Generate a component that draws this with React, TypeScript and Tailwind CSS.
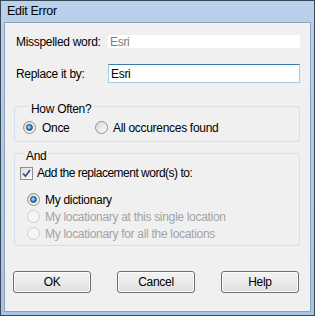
import { useState } from 'react'

const FONT = "font-['Liberation_Sans',Arial,sans-serif]"

// ─── Radio ──────────────────────────────────────────────────────

function Radio({ checked, disabled }: { checked?: boolean; disabled?: boolean }) {
  return (
    <span
      className={`
        w-[13px] h-[13px] rounded-full flex items-center justify-center flex-shrink-0 border
        ${disabled
          ? 'border-[#cfcfcf] bg-[#f4f4f4]'
          : 'border-[#8e8f8f] bg-gradient-to-br from-[#d6d6d6] to-[#ffffff]'}
      `}
    >
      {checked && (
        <span className="w-[7px] h-[7px] rounded-full border border-[#1b4a75] bg-[radial-gradient(circle_at_40%_40%,#b6e4ff_0%,#2f8ad6_55%,#124f8a_100%)]" />
      )}
    </span>
  )
}

function Checkbox({ checked }: { checked: boolean }) {
  return (
    <span className="w-[13px] h-[13px] border border-[#8e8f8f] bg-gradient-to-br from-[#dcdcdc] to-[#ffffff] flex items-center justify-center flex-shrink-0">
      {checked && (
        <svg width="9" height="9" viewBox="0 0 9 9">
          <path d="M1 4.5 L3.5 7.2 L8 1" fill="none" stroke="#3c4f8c" strokeWidth="1.8" />
        </svg>
      )}
    </span>
  )
}

function Button({ label }: { label: string }) {
  return (
    <button
      type="button"
      className="
        w-[78px] h-[22px] rounded-[3px] border border-[#707070] text-[12px] text-black
        bg-gradient-to-b from-[#f3f3f3] via-[#ebebeb] to-[#dddddd]
        shadow-[inset_0_0_0_1px_#fcfcfc]
      "
    >
      {label}
    </button>
  )
}

export default function App() {
  const [often, setOften] = useState<'once' | 'all'>('once')

  return (
    <div
      className={`${FONT} w-[315px] h-[316px] flex flex-col border border-[#3b4856] bg-gradient-to-b from-[#b9d1ea] to-[#a7c4e4] text-black text-[12px] tracking-[-0.3px]`}
    >
      {/* Title bar */}
      <div className="h-[21px] flex items-center pl-[6px] text-[12.5px] leading-none">
        Edit Error
      </div>

      {/* Client area */}
      <div className="flex-1 mx-[3px] mb-[3px] border border-[#8aa3bf] bg-[#f0f0f0] flex flex-col">
        <div className="mt-[12px] flex items-center h-[13px] pl-[11px]">
          <span className="w-[92px] leading-none">Misspelled word:</span>
          <div className="w-[192px] h-[13px] bg-white text-[#7a7a7a] pl-[2px] flex items-center leading-none">
            Esri
          </div>
        </div>

        <div className="mt-[16px] flex items-center h-[19px] pl-[11px]">
          <span className="w-[92px] leading-none">Replace it by:</span>
          <input
            defaultValue="Esri"
            className="w-[192px] h-[19px] bg-white border border-[#a4c9e3] border-t-[#3d7bad] px-[2px] text-[12px] tracking-[-0.3px] outline-none"
          />
        </div>

        {/* How Often? */}
        <fieldset className="mt-[13px] ml-[9px] w-[286px] border border-[#d5dfe5] rounded-[3px] px-[8px] pb-[7px]">
          <legend className="ml-[6px] px-[2px] pt-[6px] leading-[14px]">How Often?</legend>
          <div className="mt-[5px] flex items-center h-[13px]">
            <label className="flex items-center gap-[6px] w-[72px]" onClick={() => setOften('once')}>
              <Radio checked={often === 'once'} />
              <span className="leading-none">Once</span>
            </label>
            <label className="flex items-center gap-[5px]" onClick={() => setOften('all')}>
              <Radio checked={often === 'all'} />
              <span className="leading-none">All occurences found</span>
            </label>
          </div>
        </fieldset>

        {/* And */}
        <fieldset className="mt-[1px] ml-[9px] w-[286px] border border-[#d5dfe5] rounded-[3px] px-[5px] pb-[3px]">
          <legend className="ml-[4px] px-[2px] pt-[6px] leading-[14px]">And</legend>
          <div className="mt-[3px] flex items-center gap-[4px] h-[14px]">
            <Checkbox checked />
            <span className="leading-none tracking-[-0.5px]">Add the replacement word(s) to:</span>
          </div>
          <div className="mt-[11px] pl-[7px] flex flex-col">
            <div className="h-[17px] flex items-center gap-[5px]">
              <Radio checked />
              <span className="leading-none">My dictionary</span>
            </div>
            <div className="h-[17px] flex items-center gap-[5px] text-[#a3a3a3]">
              <Radio disabled />
              <span className="leading-none">My locationary at this single location</span>
            </div>
            <div className="h-[17px] flex items-center gap-[5px] text-[#a3a3a3]">
              <Radio disabled />
              <span className="leading-none">My locationary for all the locations</span>
            </div>
          </div>
        </fieldset>

        <div className="mt-[25px] ml-[8px] flex gap-[26px]">
          <Button label="OK" />
          <Button label="Cancel" />
          <Button label="Help" />
        </div>
      </div>
    </div>
  )
}
